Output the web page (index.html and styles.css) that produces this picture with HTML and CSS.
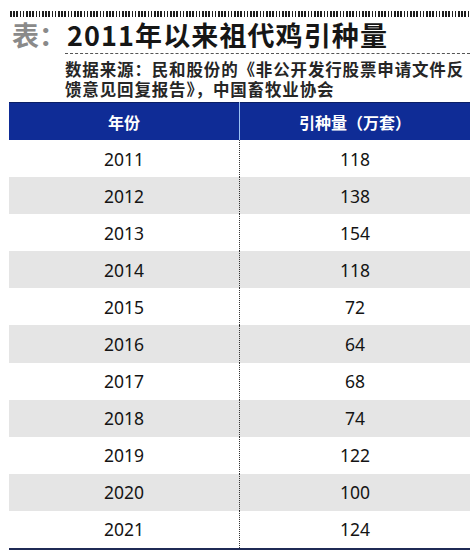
FILE: index.html
```html
<!DOCTYPE html>
<html lang="zh">
<head>
<meta charset="utf-8">
<link rel="stylesheet" href="styles.css">
</head>
<body>
<div class="page">
  <div class="stripes"></div>
  <h1 class="title"><span class="label">表：</span><span class="main">2011年以来祖代鸡引种量</span></h1>
  <p class="source">数据来源：民和股份的《非公开发行股票申请文件反馈意见回复报告》，中国畜牧业协会</p>
  <table class="data">
    <thead>
      <tr><th>年份</th><th>引种量（万套）</th></tr>
    </thead>
    <tbody>
      <tr><td>2011</td><td>118</td></tr>
      <tr><td>2012</td><td>138</td></tr>
      <tr><td>2013</td><td>154</td></tr>
      <tr><td>2014</td><td>118</td></tr>
      <tr><td>2015</td><td>72</td></tr>
      <tr><td>2016</td><td>64</td></tr>
      <tr><td>2017</td><td>68</td></tr>
      <tr><td>2018</td><td>74</td></tr>
      <tr><td>2019</td><td>122</td></tr>
      <tr><td>2020</td><td>100</td></tr>
      <tr><td>2021</td><td>124</td></tr>
    </tbody>
  </table>
</div>
</body>
</html>
```

FILE: styles.css
```css
html, body {
  margin: 0;
  padding: 0;
  background: #ffffff;
}

.page {
  width: 476px;
  height: 559px;
  padding: 11px 6px 0 9px;
  box-sizing: border-box;
  font-family: "Noto Sans CJK SC", "Noto Sans", sans-serif;
  color: #1c1c1c;
}

.stripes {
  height: 6px;
  margin: 0 0 0 1px;
  width: 460px;
  background: repeating-linear-gradient(90deg, #1e1e1e 0, #1e1e1e 1.7px, #ffffff 1.7px, #ffffff 3.2px);
}

.title {
  margin: 0;
  display: flex;
  align-items: baseline;
  height: 36px;
  font-weight: 700;
  line-height: 36px;
}

.title .label {
  width: 55px;
  padding-left: 3px;
  font-size: 27px;
  color: #8a8a8a;
}

.title .main {
  font-size: 27px;
  letter-spacing: 1.1px;
  color: #161616;
}

.source {
  margin: 0 0 3px 56px;
  padding-top: 5px;
  border-top: 1px dashed #555;
  font-size: 16.5px;
  line-height: 20px;
  font-weight: 700;
  letter-spacing: 0.85px;
  color: #262626;
}

.data {
  width: 461px;
  border-collapse: collapse;
  table-layout: fixed;
  font-family: "Noto Sans", "Noto Sans CJK SC", sans-serif;
}

.data th {
  height: 37px;
  padding: 0;
  background: #0f2c96;
  color: #ffffff;
  font-family: "Noto Sans CJK SC", sans-serif;
  font-weight: 700;
  font-size: 16px;
  text-align: center;
  border-top: 1px solid #0b1f66;
}

.data th:first-child {
  width: 230px;
  border-right: 1px solid #9cc2f2;
}

.data td {
  height: 37.1px;
  padding: 0;
  text-align: center;
  font-size: 17.5px;
  color: #141414;
}

.data td:first-child {
  border-right: 1px dotted #333;
}

.data tbody tr:nth-child(even) td {
  background: #e5e5e5;
}

.data tbody tr:last-child td {
  border-bottom: 2px solid #1f2a55;
}
```
